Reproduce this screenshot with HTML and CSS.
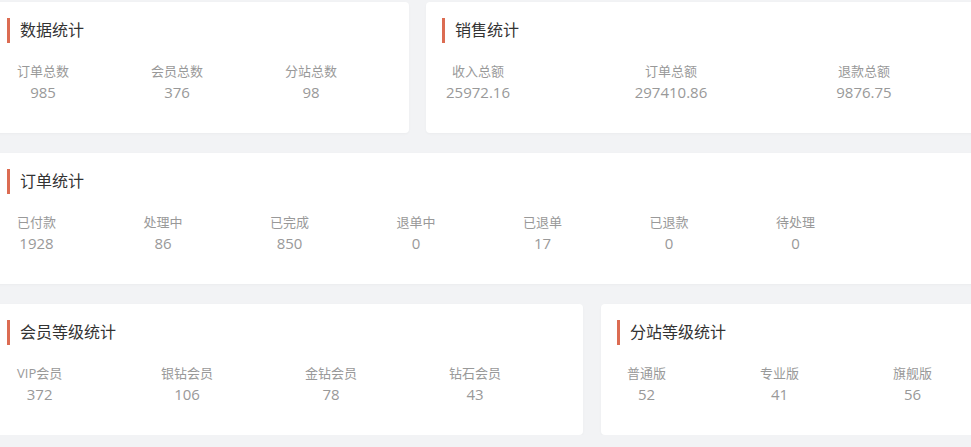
FILE: index.html
```html
<!DOCTYPE html>
<html lang="zh-CN">
<head>
    <meta charset="UTF-8">
    <meta name="viewport" content="width=device-width, initial-scale=1.0">
    <title>统计概览</title>
    <link rel="stylesheet" href="styles.css">
</head>
<body>
    <div class="page">
        <div class="row row-top">
            <div class="card card-data">
                <h2 class="card-title">数据统计</h2>
                <div class="stats">
                    <div class="stat"><span class="label">订单总数</span><span class="value">985</span></div>
                    <div class="stat"><span class="label">会员总数</span><span class="value">376</span></div>
                    <div class="stat"><span class="label">分站总数</span><span class="value">98</span></div>
                </div>
            </div>
            <div class="card card-sales">
                <h2 class="card-title">销售统计</h2>
                <div class="stats">
                    <div class="stat"><span class="label">收入总额</span><span class="value">25972.16</span></div>
                    <div class="stat"><span class="label">订单总额</span><span class="value">297410.86</span></div>
                    <div class="stat"><span class="label">退款总额</span><span class="value">9876.75</span></div>
                </div>
            </div>
        </div>

        <div class="row">
            <div class="card card-order">
                <h2 class="card-title">订单统计</h2>
                <div class="stats">
                    <div class="stat"><span class="label">已付款</span><span class="value">1928</span></div>
                    <div class="stat"><span class="label">处理中</span><span class="value">86</span></div>
                    <div class="stat"><span class="label">已完成</span><span class="value">850</span></div>
                    <div class="stat"><span class="label">退单中</span><span class="value">0</span></div>
                    <div class="stat"><span class="label">已退单</span><span class="value">17</span></div>
                    <div class="stat"><span class="label">已退款</span><span class="value">0</span></div>
                    <div class="stat"><span class="label">待处理</span><span class="value">0</span></div>
                </div>
            </div>
        </div>

        <div class="row row-bottom">
            <div class="card card-member">
                <h2 class="card-title">会员等级统计</h2>
                <div class="stats">
                    <div class="stat"><span class="label">VIP会员</span><span class="value">372</span></div>
                    <div class="stat"><span class="label">银钻会员</span><span class="value">106</span></div>
                    <div class="stat"><span class="label">金钻会员</span><span class="value">78</span></div>
                    <div class="stat"><span class="label">钻石会员</span><span class="value">43</span></div>
                </div>
            </div>
            <div class="card card-site">
                <h2 class="card-title">分站等级统计</h2>
                <div class="stats">
                    <div class="stat"><span class="label">普通版</span><span class="value">52</span></div>
                    <div class="stat"><span class="label">专业版</span><span class="value">41</span></div>
                    <div class="stat"><span class="label">旗舰版</span><span class="value">56</span></div>
                </div>
            </div>
        </div>
    </div>
</body>
</html>
```

FILE: styles.css
```css
* {
    margin: 0;
    padding: 0;
    box-sizing: border-box;
}

body {
    font-family: 'Open Sans', 'Noto Sans CJK SC', sans-serif;
    background: #f2f3f5;
    overflow: hidden;
}

.page {
    width: 1010px;
    margin-left: -9px;
    padding-top: 2px;
    display: flex;
    flex-direction: column;
    gap: 20px;
}

.row {
    display: flex;
}

.row-top {
    gap: 17px;
}

.row-bottom {
    gap: 18px;
}

.card {
    background: #fff;
    border-radius: 4px;
    height: 131px;
    padding: 16px 0 0 16px;
    box-shadow: 0 1px 3px rgba(0, 0, 0, 0.03);
}

.card-data {
    width: 418px;
}

.card-sales,
.card-order,
.card-site {
    flex: 1;
}

.card-member {
    width: 592px;
}

.card-title {
    height: 25px;
    line-height: 25px;
    border-left: 3px solid #dc6c52;
    padding-left: 10px;
    font-size: 16px;
    font-weight: normal;
    color: #333;
}

.stats {
    display: grid;
    justify-items: start;
    margin-top: 19px;
    padding-left: 10px;
}

.card-data .stats {
    grid-template-columns: repeat(3, 134px);
}

.card-sales .stats {
    grid-template-columns: repeat(3, 193px);
}

.card-order .stats {
    grid-template-columns: repeat(7, 126.5px);
}

.card-member .stats {
    grid-template-columns: repeat(4, 144px);
}

.card-site .stats {
    grid-template-columns: repeat(3, 133px);
}

/* the label sets the width, the number is centred under it */
.stat {
    display: flex;
    flex-direction: column;
    gap: 2px;
    text-align: center;
}

.label {
    font-size: 13px;
    line-height: 18px;
    color: #999;
    white-space: nowrap;
}

.value {
    margin: 0 -40px;
    font-size: 15px;
    line-height: 20px;
    color: #999;
    white-space: nowrap;
}
```
